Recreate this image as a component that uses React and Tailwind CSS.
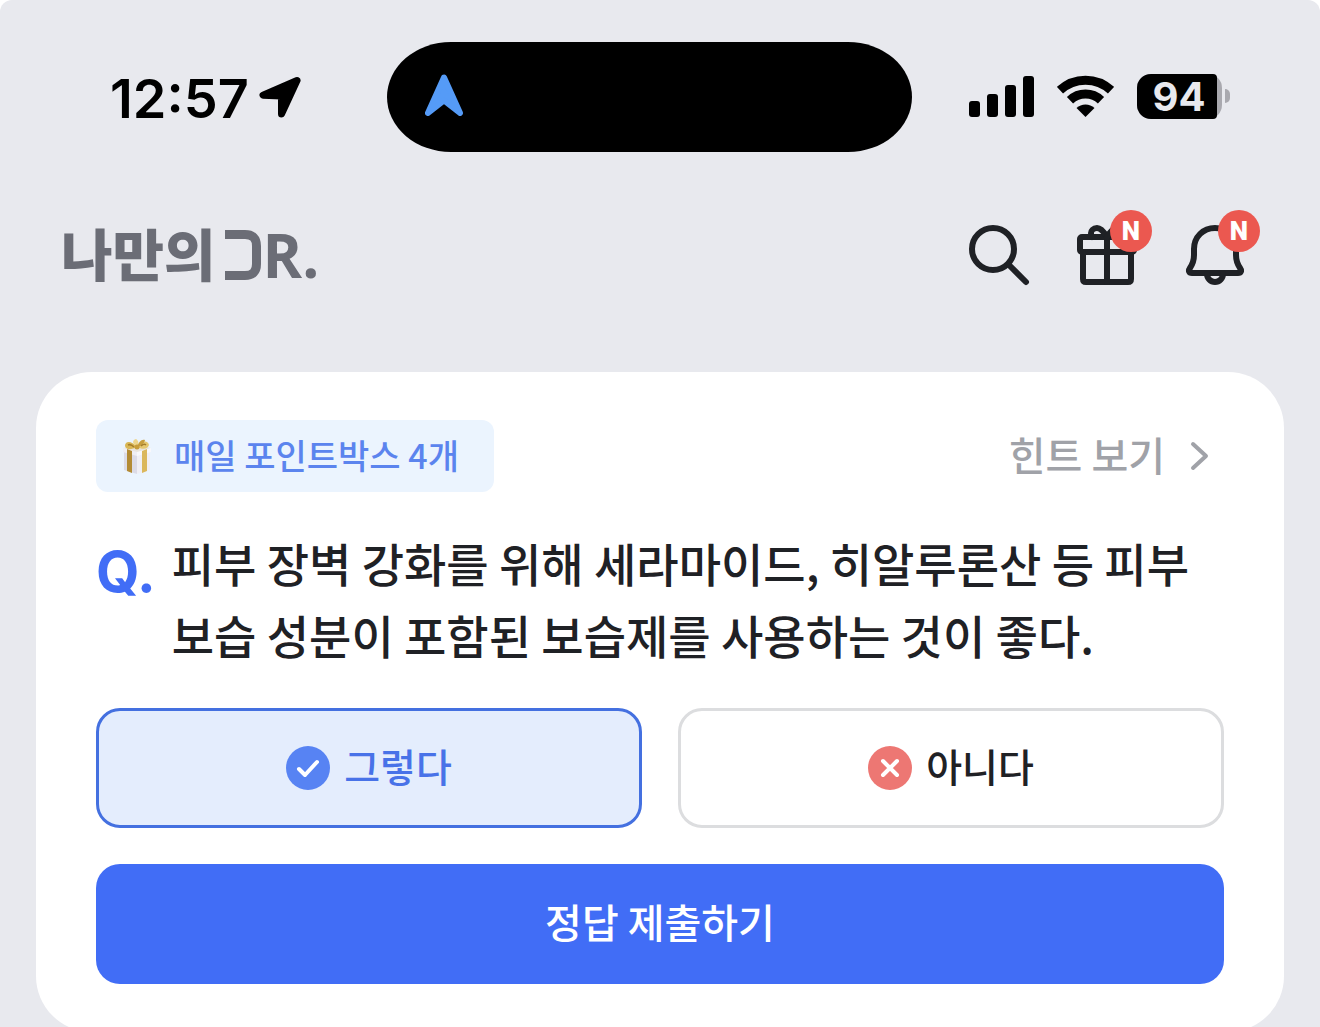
// src/App.jsx
import React, { useState } from 'react';

const LocationArrow = () => (
  <svg className="w-[42px] h-[42px]" viewBox="0 0 42 42" aria-hidden="true">
    <path
      d="M38 4.5 L4 19.2 L22.5 20 L22.5 38 Z"
      fill="black"
      stroke="black"
      strokeWidth="7"
      strokeLinejoin="round"
    />
  </svg>
);

const NavArrow = () => (
  <svg className="w-[38px] h-[42px]" viewBox="0 0 38 42" aria-hidden="true">
    <path
      d="M19 3.5 L3 39 L19 26.5 L35 39 Z"
      fill="#559bf7"
      stroke="#559bf7"
      strokeWidth="6"
      strokeLinejoin="round"
    />
  </svg>
);

const Signal = () => (
  <svg className="w-[65px] h-[42px]" viewBox="0 0 65 42" aria-hidden="true">
    <rect x="0" y="26" width="11" height="16" rx="3" />
    <rect x="18" y="19" width="11" height="23" rx="3" />
    <rect x="36" y="10" width="11" height="32" rx="3" />
    <rect x="54" y="1" width="11" height="41" rx="3" />
  </svg>
);

const Wifi = () => (
  <svg className="w-[57px] h-[42px]" viewBox="0 0 57 42" aria-hidden="true">
    <path d="M3 15.2 A37.5 37.5 0 0 1 54 15.2" fill="none" stroke="black" strokeWidth="9" />
    <path d="M13 25.2 A22.5 22.5 0 0 1 44 25.2" fill="none" stroke="black" strokeWidth="9" />
    <path d="M28.5 42 L19.5 33 A13 13 0 0 1 37.5 33 Z" />
  </svg>
);

const Battery = () => (
  <div className="flex items-center gap-[3px]">
    <div className="flex w-[85px] rounded-[14px] bg-[#a9a9af]">
      <span className="w-20 rounded-l-[14px] rounded-r-sm bg-black pl-1 text-center font-bold text-[40px] leading-[45px] text-[#e8e9ee]">
        94
      </span>
    </div>
    <div className="w-[5px] h-[14px] rounded-r-full bg-[#a9a9af]"></div>
  </div>
);

const Logo = () => (
  <a href="#home" className="flex items-center text-[#6b6d76]">
    <span className="pb-1.5 text-[56px] leading-[60px] font-black">나만의</span>
    <svg className="ml-[9px] w-9 h-[50px]" viewBox="0 0 36 50" aria-hidden="true">
      <path d="M0 4.5 H20 Q31.5 4.5 31.5 16 V34 Q31.5 45.5 20 45.5 H0" fill="none" stroke="currentColor" strokeWidth="9" />
    </svg>
    <span className="ml-0.5 font-['Open_Sans',sans-serif] text-[60px] leading-[60px] font-bold">
      R.
    </span>
  </a>
);

const iconProps = {
  className: 'w-[72px] h-[72px]',
  viewBox: '0 0 72 72',
  fill: 'none',
  stroke: '#1f2125',
  strokeWidth: 6,
  strokeLinecap: 'round',
  strokeLinejoin: 'round',
  'aria-hidden': true,
};

const SearchIcon = () => (
  <svg {...iconProps}>
    <circle cx="30" cy="30" r="21" />
    <path d="M46 46 L63 63" />
  </svg>
);

const GiftIcon = () => (
  <svg {...iconProps}>
    <rect x="9" y="18" width="54" height="15" rx="2" />
    <path d="M12 33 V60 Q12 63 15 63 H57 Q60 63 60 60 V33" />
    <path d="M36 18 V63" />
    <path d="M36 18 C33 13 30 9 26 9 C22 9 20 12 20 14 C20 16 20 17 21 18" />
    <path d="M36 18 C39 13 42 9 46 9 C50 9 52 12 52 14 C52 16 52 17 51 18" />
  </svg>
);

const BellIcon = () => (
  <svg {...iconProps}>
    <path d="M36 9 C24 9 15 18 15 30 V36 C15 42 13 46 11 49 C9 52 10 54 13 54 H59 C62 54 63 52 61 49 C59 46 57 42 57 36 V30 C57 18 48 9 36 9 Z" />
    <path d="M28 55 A8 8 0 0 0 44 55" />
  </svg>
);

const NewBadge = () => (
  <span className="absolute left-[39px] -top-[9px] flex w-[42px] h-[42px] items-center justify-center rounded-full bg-[#eb5850] font-['Roboto',sans-serif] text-[26px] leading-none font-black text-white">
    N
  </span>
);

const GiftBox = () => (
  <svg className="w-[30px] h-9" viewBox="0 0 30 36" aria-hidden="true">
    <path d="M2 12 L15 15 V36 L2 32 Z" fill="#dcdbe6" />
    <path d="M15 15 L28 12 V32 L15 36 Z" fill="#f0eff5" />
    <path d="M1 10 L15 7 L29 10 L15 15 Z" fill="#e9e4dd" />
    <path d="M1 10 L15 14 V18 L1 14 Z" fill="#efeef4" />
    <path d="M15 14 L29 10 V14 L15 18 Z" fill="#f8f8fb" />
    <path d="M5 11 L10 13 V35 L5 33 Z" fill="#b38b35" />
    <path d="M20 13 L25 11 V33 L20 35 Z" fill="#dbb75c" />
    <path d="M15 9 C9 12 4 12 3 8 C3 3 9 2 15 9 Z" fill="#d9b654" />
    <path d="M15 9 C21 12 26 11 27 7 C26 2 20 2 15 9 Z" fill="#e5c870" />
    <path d="M15 9 C10 6 10 2 14 1 C17 3 17 6 15 9 Z" fill="#edd58b" />
    <path d="M15 9 C17 4 19 1 23 2 C22 6 19 8 15 9 Z" fill="#c79e3e" />
    <path d="M6 7 C8 6 10 7 12 9 M19 8 C21 6 23 6 24 7" fill="none" stroke="#a57d2b" strokeWidth="1.5" />
    <circle cx="15" cy="9" r="2.5" fill="#c79d3c" />
  </svg>
);

const choices = [
  { id: 'yes', label: '그렇다', color: '#5783f3', mark: 'M13 23 L19 29 L31 16' },
  { id: 'no', label: '아니다', color: '#ed7773', mark: 'M15 15 L29 29 M29 15 L15 29' },
];

const App = () => {
  const [answer, setAnswer] = useState('yes');

  return (
    <div className="h-screen overflow-hidden bg-white">
      <div className="min-h-full rounded-t-xl bg-[#e8e9ee] font-['Noto_Sans_CJK_KR',sans-serif] font-medium text-[#1f2125]">
        <div className="flex items-center pt-[42px] pl-[110px] pr-[90px] font-['Inter',sans-serif] text-black">
          <div className="flex items-center gap-2.5">
            <span className="pt-1 text-[54px] leading-none font-semibold">12:57</span>
            <LocationArrow />
          </div>
          <div className="ml-[86px] flex h-[110px] w-[525px] items-center rounded-[64px/55px] bg-black pb-1 pl-[38px]">
            <NavArrow />
          </div>
          <div className="ml-auto flex items-center gap-[23px] pb-0.5">
            <Signal />
            <Wifi />
            <Battery />
          </div>
        </div>

        <header className="mt-[67px] flex items-center justify-between pl-[61px] pr-[69px]">
          <Logo />
          <nav className="flex gap-9">
            <button aria-label="검색">
              <SearchIcon />
            </button>
            <button className="relative" aria-label="선물">
              <GiftIcon />
              <NewBadge />
            </button>
            <button className="relative" aria-label="알림">
              <BellIcon />
              <NewBadge />
            </button>
          </nav>
        </header>

        <main className="mx-9 mt-[81px] rounded-[56px] bg-white px-[60px] py-12">
          <div className="flex items-center justify-between">
            <div className="flex h-[72px] items-center gap-[22px] rounded-xl bg-[#ebf4fe] pl-[26px] pr-[35px] text-[34px] text-[#5b84ee]">
              <GiftBox />
              <span className="pb-1">매일 포인트박스 4개</span>
            </div>
            <a href="#hint" className="flex items-center gap-6 pr-[15px] text-[40px] leading-[68px] text-[#a0a2a8]">
              <span className="pb-1">힌트 보기</span>
              <svg className="w-5 h-8" viewBox="0 0 20 32" fill="none" stroke="currentColor" strokeWidth="4" strokeLinecap="round" strokeLinejoin="round" aria-hidden="true">
                <path d="M4 4 L17 16 L4 28" />
              </svg>
            </a>
          </div>

          <div className="mt-[34px] flex gap-4">
            <span className="pt-1 font-['Inter',sans-serif] text-[56px] leading-[84px] font-bold text-[#416df6]">Q.</span>
            <h1 className="pb-0.5 text-[46px] leading-[72px]">
              피부 장벽 강화를 위해 세라마이드, 히알루론산 등 피부 보습 성분이 포함된 보습제를 사용하는 것이 좋다.
            </h1>
          </div>

          <div className="mt-9 grid grid-cols-2 gap-9">
            {choices.map((choice) => (
              <button
                key={choice.id}
                aria-pressed={answer === choice.id}
                onClick={() => setAnswer(choice.id)}
                className={`flex h-[120px] items-center justify-center gap-[14px] rounded-3xl border-3 text-[39px] ${
                  answer === choice.id
                    ? 'border-[#4470e0] bg-[#e4edfd] text-[#4872e8]'
                    : 'border-[#dcdddf] bg-white'
                }`}
              >
                <svg className="w-11 h-11" viewBox="0 0 44 44" aria-hidden="true">
                  <circle cx="22" cy="22" r="22" fill={choice.color} />
                  <path d={choice.mark} fill="none" stroke="white" strokeWidth="4" strokeLinecap="round" strokeLinejoin="round" />
                </svg>
                <span className="pb-1.5">{choice.label}</span>
              </button>
            ))}
          </div>

          <button className="mt-9 h-[120px] w-full rounded-3xl bg-[#416df6] pb-1.5 text-[40px] text-white">
            정답 제출하기
          </button>
        </main>
      </div>
    </div>
  );
};

export default App;
